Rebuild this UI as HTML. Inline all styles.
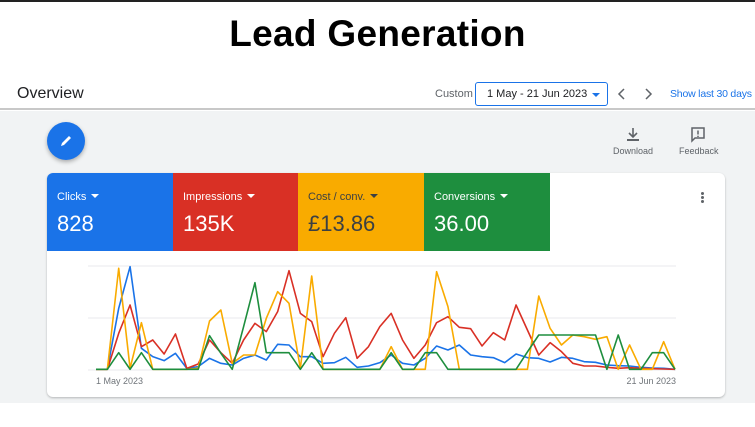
<!DOCTYPE html>
<html><head><meta charset="utf-8"><style>
*{margin:0;padding:0;box-sizing:border-box}
body{width:755px;height:427px;overflow:hidden;background:#fff;font-family:"Liberation Sans",Arial,sans-serif;position:relative}
.abs{position:absolute}
.title{left:0;width:755px;top:13px;text-align:center;font-size:37px;font-weight:bold;color:#000;letter-spacing:0.3px}
.top{left:0;top:0;width:755px;height:2px;background:#222}
.hdr{left:0;top:77px;width:755px;height:33px;background:#fff;border-bottom:2px solid #c8c8c8}
.gray{left:0;top:111px;width:755px;height:292px;background:#f1f3f4}
.card{left:47px;top:173px;width:678px;height:224px;background:#fff;border-radius:6px;box-shadow:0 1px 2px rgba(0,0,0,.25);overflow:hidden}
.m{position:absolute;top:0;height:78px;width:126px;color:#fff}
.m .l{position:absolute;left:10px;top:18px;font-size:11px}
.m .v{position:absolute;left:10px;top:38px;font-size:22px}
.tri{display:inline-block;width:0;height:0;border-left:4px solid transparent;border-right:4px solid transparent;border-top:4px solid currentColor;margin-left:5px;vertical-align:2px}
</style></head><body>
<div class="abs top"></div>
<div class="abs title">Lead Generation</div>
<div class="abs hdr"></div>
<div class="abs" style="left:17px;top:85px;font-size:16px;color:#202124">Overview</div>
<div class="abs" style="left:435px;top:88px;font-size:11px;color:#5f6368">Custom</div>
<div class="abs" style="left:475px;top:82px;width:133px;height:24px;border:1.5px solid #1a73e8;border-radius:3px;font-size:11px;color:#202124;padding:5px 0 0 11px">1 May - 21 Jun 2023<span class="abs" style="left:116px;top:10px;border-left:4px solid transparent;border-right:4px solid transparent;border-top:4px solid #1a73e8"></span></div>
<svg class="abs" style="left:614px;top:86px" width="44" height="16"><path d="M10 3 L5 8 L10 13" stroke="#5f6368" stroke-width="1.5" fill="none"/><path d="M32 3 L37 8 L32 13" stroke="#5f6368" stroke-width="1.5" fill="none"/></svg>
<div class="abs" style="left:670px;top:88px;font-size:10.5px;letter-spacing:-0.2px;color:#1a73e8;white-space:nowrap">Show last 30 days</div>
<div class="abs gray"></div>
<div class="abs" style="left:47px;top:122px;width:38px;height:38px;border-radius:50%;background:#1a73e8;box-shadow:0 2px 4px rgba(0,0,0,.3)"></div>
<svg class="abs" style="left:58px;top:133px" width="16" height="16"><path d="M3 13 L4 10 L11 3 L13 5 L6 12 Z" fill="#fff"/></svg>
<svg class="abs" style="left:624px;top:127px" width="18" height="16"><path d="M9 1 V9 M5 6 L9 10 L13 6" stroke="#5f6368" stroke-width="1.6" fill="none"/><path d="M3 13 H15" stroke="#5f6368" stroke-width="2"/></svg>
<div class="abs" style="left:613px;top:146px;font-size:9px;color:#5f6368">Download</div>
<svg class="abs" style="left:689px;top:126px" width="18" height="18"><path d="M3 2 H15 V12 H6 L3 15 Z" stroke="#5f6368" stroke-width="1.5" fill="none"/><path d="M9 4.5 V8.5 M9 9.8 V11" stroke="#5f6368" stroke-width="1.5"/></svg>
<div class="abs" style="left:679px;top:146px;font-size:9px;color:#5f6368">Feedback</div>
<div class="abs card">
<div class="m" style="left:0;background:#1a73e8"><div class="l">Clicks<span class="tri"></span></div><div class="v">828</div></div>
<div class="m" style="left:126px;background:#d93025"><div class="l">Impressions<span class="tri"></span></div><div class="v">135K</div></div>
<div class="m" style="left:251px;background:#f9ab00;color:#3c4043"><div class="l">Cost / conv.<span class="tri"></span></div><div class="v">£13.86</div></div>
<div class="m" style="left:377px;background:#1e8e3e"><div class="l">Conversions<span class="tri"></span></div><div class="v">36.00</div></div>
<div class="abs" style="left:654px;top:19px;width:3px;height:3px;border-radius:50%;background:#5f6368;box-shadow:0 4px 0 #5f6368,0 8px 0 #5f6368"></div>
</div>
<svg class="abs" style="left:0;top:0" width="755" height="427">
<g stroke="#e8eaed" stroke-width="1"><path d="M88 266 H676 M88 318 H676 M88 370 H676"/></g>
<g transform="translate(96,250) scale(11.353,0.33333)" fill="none" stroke-width="1.6" stroke-linejoin="round">
<polyline vector-effect="non-scaling-stroke" stroke="#1a73e8" points="0,358 1,358 2,175 3,50 4,295 5,320 6,332 7,310 8,355 9,350 10,325 11,340 12,345 13,325 14,315 15,330 16,283 17,285 18,320 19,320 20,340 21,338 22,322 23,352 24,348 25,338 26,315 27,340 28,345 29,325 30,288 31,300 32,285 33,315 34,320 35,323 36,338 37,312 38,323 39,325 40,336 41,322 42,325 43,335 44,337 45,345 46,347 47,348 48,352 49,354 50,355 51,358"/>
<polyline vector-effect="non-scaling-stroke" stroke="#d93025" points="0,358 1,358 2,250 3,165 4,290 5,270 6,312 7,252 8,355 9,342 10,270 11,308 12,340 13,270 14,220 15,245 16,185 17,62 18,190 19,215 20,320 21,250 22,203 23,325 24,290 25,230 26,190 27,270 28,325 29,285 30,218 31,200 32,232 33,236 34,288 35,248 36,270 37,165 38,240 39,315 40,278 41,305 42,340 43,348 44,348 45,352 46,355 47,353 48,355 49,356 50,357 51,358"/>
<polyline vector-effect="non-scaling-stroke" stroke="#f9ab00" points="0,358 1,358 2,55 3,355 4,218 5,358 6,358 7,358 8,358 9,355 10,213 11,180 12,340 13,315 14,315 15,205 16,125 17,160 18,355 19,78 20,358 21,358 22,358 23,358 24,358 25,358 26,290 27,358 28,358 29,358 30,65 31,170 32,358 33,358 34,358 35,358 36,358 37,358 38,358 39,138 40,235 41,285 42,255 43,260 44,268 45,260 46,358 47,285 48,358 49,358 50,275 51,358"/>
<polyline vector-effect="non-scaling-stroke" stroke="#1e8e3e" points="0,358 1,358 2,308 3,358 4,308 5,358 6,358 7,358 8,358 9,358 10,257 11,310 12,358 13,230 14,98 15,308 16,308 17,308 18,358 19,308 20,358 21,358 22,358 23,358 24,358 25,358 26,308 27,358 28,358 29,308 30,308 31,358 32,358 33,358 34,358 35,358 36,358 37,358 38,306 39,255 40,255 41,255 42,255 43,255 44,255 45,358 46,255 47,358 48,358 49,308 50,308 51,358"/>
</g>
<text x="96" y="384" font-size="9" fill="#70757a" font-family="Liberation Sans,sans-serif">1 May 2023</text>
<text x="676" y="384" font-size="9" fill="#70757a" text-anchor="end" font-family="Liberation Sans,sans-serif">21 Jun 2023</text>
</svg>
</body></html>
